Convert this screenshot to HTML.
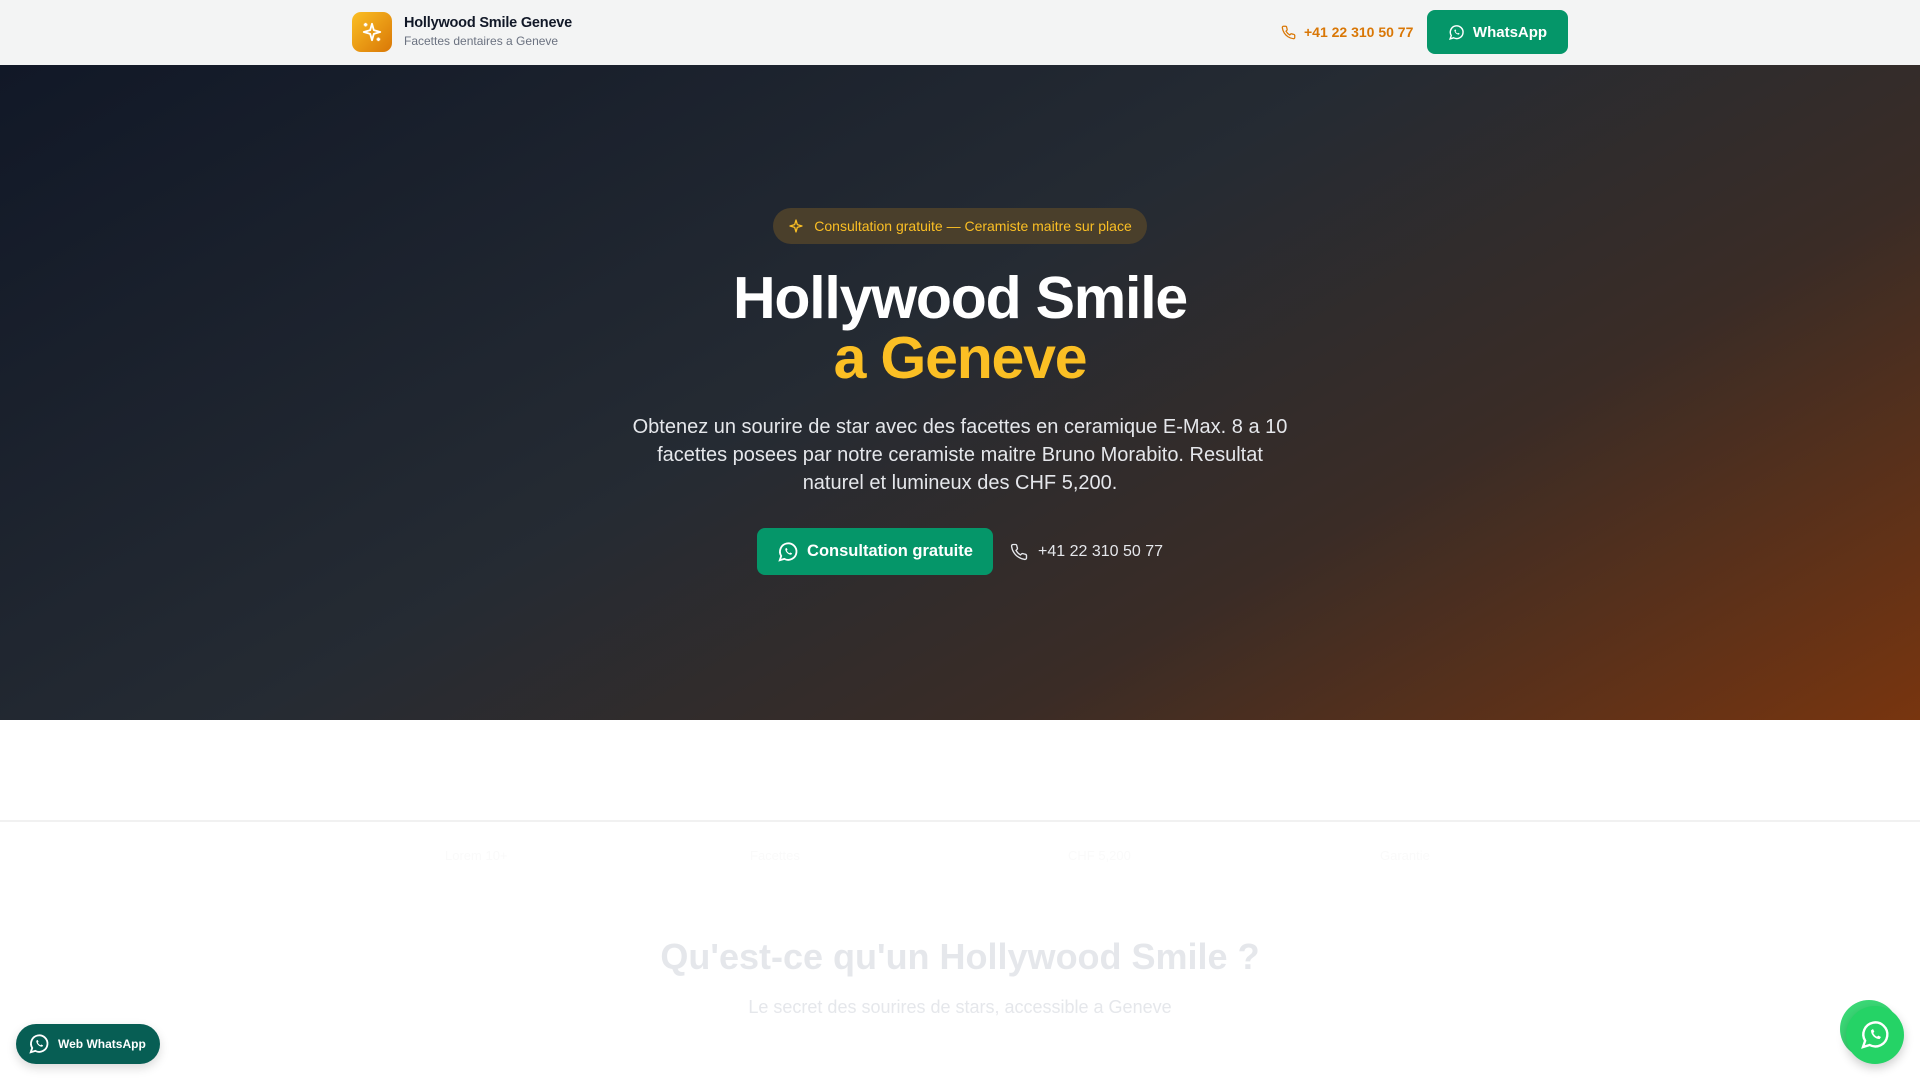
<!DOCTYPE html>
<html><head><meta charset="utf-8"><style>
*{margin:0;padding:0;box-sizing:border-box}
body{width:1920px;height:1080px;overflow:hidden;font-family:"Liberation Sans",sans-serif;background:#fff;position:relative}
.hdr{position:absolute;top:0;left:0;width:1920px;height:65px;background:#f3f4f4}
.logo{position:absolute;left:352px;top:12px;width:40px;height:40px;border-radius:9px;background:linear-gradient(135deg,#fbbf24,#d97706);display:flex;align-items:center;justify-content:center}
.t1{position:absolute;left:404px;top:15px;font-size:14.5px;font-weight:bold;color:#111827;letter-spacing:-0.2px}
.t2{position:absolute;left:404px;top:34px;font-size:12px;color:#6b7280}
.ph{position:absolute;left:1281px;top:24px;font-size:14px;font-weight:bold;color:#d97706;display:flex;align-items:center;gap:8px}
.wa{position:absolute;left:1427px;top:10px;width:141px;height:44px;border-radius:8px;background:#059669;color:#fff;font-size:15px;font-weight:bold;display:flex;align-items:center;justify-content:center;gap:8px}
.hero{position:absolute;top:65px;left:0;width:1920px;height:655px;background:linear-gradient(150deg,#111827 0%,#252b33 45%,#3a2c26 70%,#78350f 100%)}
.badge{position:absolute;left:773px;top:208px;width:374px;height:36px;border-radius:18px;background:#4a3f2b;color:#fbbf24;font-size:14px;display:flex;align-items:center;justify-content:center;gap:10px}
h1{position:absolute;top:268px;left:0;width:1920px;text-align:center;font-size:59px;line-height:60px;color:#fff;font-weight:bold;letter-spacing:-1.2px}
h1 span{color:#fbbf24}
.p{position:absolute;top:413px;left:624px;width:672px;text-align:center;font-size:20px;line-height:28px;color:#e5e7eb}
.cta{position:absolute;left:757px;top:528px;width:236px;height:47px;border-radius:8px;background:#059669;color:#fff;font-size:16.5px;font-weight:bold;display:flex;align-items:center;justify-content:center;gap:8px}
.ph2{position:absolute;left:1010px;top:543px;font-size:16px;color:#e5e7eb;display:flex;align-items:center;gap:10px}
.line{position:absolute;top:820px;left:0;width:1920px;height:2px;background:#f1f1f1}
.h2{position:absolute;top:936px;left:0;width:1920px;text-align:center;font-size:36px;font-weight:bold;color:#e5e7eb}
.sub{position:absolute;top:997px;left:0;width:1920px;text-align:center;font-size:18px;color:#e5e7eb}
.stat{position:absolute;top:848px;font-size:13px;color:#fafafa}
.web{position:absolute;left:16px;top:1024px;width:144px;height:40px;border-radius:20px;background:#075e54;color:#fff;font-size:12px;font-weight:bold;display:flex;align-items:center;gap:8px;padding-left:12px;box-shadow:0 4px 10px rgba(0,0,0,.15)}
.fab{position:absolute;width:58px;height:58px;border-radius:50%;background:#25d366}
</style></head><body>
<div class="hdr">
<div class="logo"><svg width="22" height="22" viewBox="0 0 24 24" fill="none" stroke="#fff" stroke-width="2" stroke-linejoin="round"><path d="M12 3l2 7 7 2-7 2-2 7-2-7-7-2 7-2z"/><path d="M5 2v4M3 4h4M19 18v4M17 20h4"/></svg></div>
<div class="t1">Hollywood Smile Geneve</div>
<div class="t2">Facettes dentaires a Geneve</div>
<div class="ph"><svg width="15" height="15" viewBox="0 0 24 24" fill="none" stroke="#d97706" stroke-width="2"><path d="M22 16.9v3a2 2 0 0 1-2.2 2 19.8 19.8 0 0 1-8.6-3.1 19.5 19.5 0 0 1-6-6A19.8 19.8 0 0 1 2.1 4.2 2 2 0 0 1 4.1 2h3a2 2 0 0 1 2 1.7c.1 1 .4 1.9.7 2.8a2 2 0 0 1-.5 2.1L8 9.9a16 16 0 0 0 6 6l1.3-1.3a2 2 0 0 1 2.1-.4c.9.3 1.8.6 2.8.7a2 2 0 0 1 1.7 2z"/></svg>+41 22 310 50 77</div>
<div class="wa"><svg width="17" height="17" viewBox="0 0 24 24" fill="none" stroke="#fff" stroke-width="2"><path d="M3 21l1.6-4.7A9 9 0 1 1 8 19.5z"/><path d="M9 8.5c0 3.5 3 6.5 6.5 6.5l1-1.5-2-1-1 .8c-1.2-.5-2.3-1.6-2.8-2.8l.8-1-1-2z" fill="#fff" stroke="none"/></svg>WhatsApp</div>
</div>
<div class="hero"></div>
<div class="badge"><svg width="16" height="16" viewBox="0 0 24 24" fill="none" stroke="#fbbf24" stroke-width="2" stroke-linejoin="round"><path d="M12 3l2 7 7 2-7 2-2 7-2-7-7-2 7-2z"/></svg>Consultation gratuite — Ceramiste maitre sur place</div>
<h1>Hollywood Smile<br><span>a Geneve</span></h1>
<div class="p">Obtenez un sourire de star avec des facettes en ceramique E-Max. 8 a 10 facettes posees par notre ceramiste maitre Bruno Morabito. Resultat naturel et lumineux des CHF 5,200.</div>
<div class="cta"><svg width="22" height="22" viewBox="0 0 24 24" fill="none" stroke="#fff" stroke-width="2"><path d="M3 21l1.6-4.7A9 9 0 1 1 8 19.5z"/><path d="M9 8.5c0 3.5 3 6.5 6.5 6.5l1-1.5-2-1-1 .8c-1.2-.5-2.3-1.6-2.8-2.8l.8-1-1-2z" fill="#fff" stroke="none"/></svg>Consultation gratuite</div>
<div class="ph2"><svg width="18" height="18" viewBox="0 0 24 24" fill="none" stroke="#e5e7eb" stroke-width="1.8"><path d="M22 16.9v3a2 2 0 0 1-2.2 2 19.8 19.8 0 0 1-8.6-3.1 19.5 19.5 0 0 1-6-6A19.8 19.8 0 0 1 2.1 4.2 2 2 0 0 1 4.1 2h3a2 2 0 0 1 2 1.7c.1 1 .4 1.9.7 2.8a2 2 0 0 1-.5 2.1L8 9.9a16 16 0 0 0 6 6l1.3-1.3a2 2 0 0 1 2.1-.4c.9.3 1.8.6 2.8.7a2 2 0 0 1 1.7 2z"/></svg>+41 22 310 50 77</div>
<div class="line"></div>
<div class="stat" style="left:445px">Lorem 10+</div>
<div class="stat" style="left:750px">Facettes</div>
<div class="stat" style="left:1068px">CHF 5,200</div>
<div class="stat" style="left:1380px">Garantie</div>
<div class="h2">Qu'est-ce qu'un Hollywood Smile ?</div>
<div class="sub">Le secret des sourires de stars, accessible a Geneve</div>
<div class="web"><svg width="22" height="22" viewBox="0 0 24 24" fill="none" stroke="#fff" stroke-width="2"><path d="M3 21l1.6-4.7A9 9 0 1 1 8 19.5z"/><path d="M9 8.5c0 3.5 3 6.5 6.5 6.5l1-1.5-2-1-1 .8c-1.2-.5-2.3-1.6-2.8-2.8l.8-1-1-2z" fill="#fff" stroke="none"/></svg>Web WhatsApp</div>
<div class="fab" style="left:1840px;top:1000px;opacity:.9"></div>
<div class="fab" style="left:1846px;top:1006px;display:flex;align-items:center;justify-content:center;box-shadow:0 4px 10px rgba(0,0,0,.2)"><svg width="32" height="32" viewBox="0 0 24 24" fill="none" stroke="#fff" stroke-width="1.8"><path d="M3 21l1.6-4.7A9 9 0 1 1 8 19.5z"/><path d="M9 8.5c0 3.5 3 6.5 6.5 6.5l1-1.5-2-1-1 .8c-1.2-.5-2.3-1.6-2.8-2.8l.8-1-1-2z" fill="#fff" stroke="none"/></svg></div>
</body></html>
